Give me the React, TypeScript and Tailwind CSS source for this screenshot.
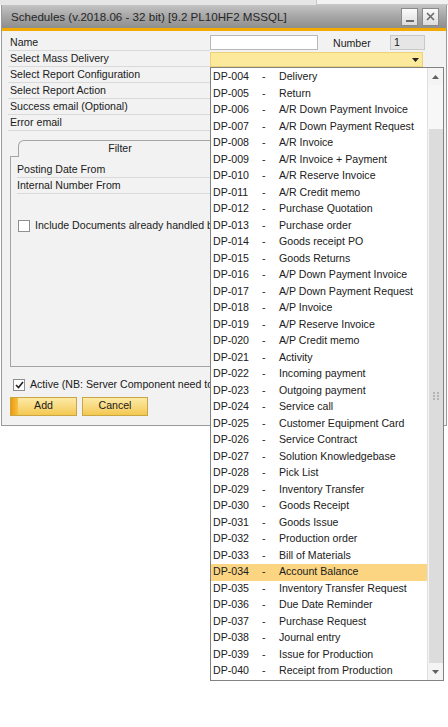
import React from "react";

const items: [string, string][] = [
  ["DP-004", "Delivery"],
  ["DP-005", "Return"],
  ["DP-006", "A/R Down Payment Invoice"],
  ["DP-007", "A/R Down Payment Request"],
  ["DP-008", "A/R Invoice"],
  ["DP-009", "A/R Invoice + Payment"],
  ["DP-010", "A/R Reserve Invoice"],
  ["DP-011", "A/R Credit memo"],
  ["DP-012", "Purchase Quotation"],
  ["DP-013", "Purchase order"],
  ["DP-014", "Goods receipt PO"],
  ["DP-015", "Goods Returns"],
  ["DP-016", "A/P Down Payment Invoice"],
  ["DP-017", "A/P Down Payment Request"],
  ["DP-018", "A/P Invoice"],
  ["DP-019", "A/P Reserve Invoice"],
  ["DP-020", "A/P Credit memo"],
  ["DP-021", "Activity"],
  ["DP-022", "Incoming payment"],
  ["DP-023", "Outgoing payment"],
  ["DP-024", "Service call"],
  ["DP-025", "Customer Equipment Card"],
  ["DP-026", "Service Contract"],
  ["DP-027", "Solution Knowledgebase"],
  ["DP-028", "Pick List"],
  ["DP-029", "Inventory Transfer"],
  ["DP-030", "Goods Receipt"],
  ["DP-031", "Goods Issue"],
  ["DP-032", "Production order"],
  ["DP-033", "Bill of Materials"],
  ["DP-034", "Account Balance"],
  ["DP-035", "Inventory Transfer Request"],
  ["DP-036", "Due Date Reminder"],
  ["DP-037", "Purchase Request"],
  ["DP-038", "Journal entry"],
  ["DP-039", "Issue for Production"],
  ["DP-040", "Receipt from Production"],
];

function LabelRow({ label }: { label: string }) {
  return (
    <div className="flex h-[16px] items-center">
      <div className="h-[16px] w-[202px] border-b border-[#dadada] pl-[2px] leading-[15px] whitespace-nowrap">
        {label}
      </div>
    </div>
  );
}

export default function App() {
  return (
    <div
      className="relative w-[448px] h-[727px] overflow-hidden bg-white text-[10.6px] text-[#202020]"
      style={{ fontFamily: '"Liberation Sans", Arial, sans-serif' }}
    >
      {/* strip of background window */}
      <div className="flex h-[5px] bg-[#e6e6e6]">
        <div className="flex-1" />
        <div className="w-[132px] border-l border-b border-[#c8c8c8] bg-[#f2f2f2]" />
      </div>

      {/* window */}
      <div className="ml-[1px] w-[446px] border-x border-b border-[#9a9a9a] bg-[#f2f2f2]">
        {/* title bar */}
        <div className="flex h-[23px] items-center bg-gradient-to-b from-[#c4c4c4] via-[#a6a6a6] to-[#8e8e8e] pl-[9px] pr-[7px]">
          <div className="flex-1 text-[11.6px] text-[#262626] whitespace-nowrap">
            Schedules (v.2018.06 - 32 bit) [9.2 PL10HF2 MSSQL]
          </div>
          <div className="flex gap-[4px]">
            <div className="flex h-[18px] w-[17px] items-end justify-center border border-[#8a8a8a] bg-gradient-to-b from-[#fbfbfb] to-[#dcdcdc] pb-[3px]">
              <div className="h-[2px] w-[8px] bg-[#6a6a6a]" />
            </div>
            <div className="flex h-[18px] w-[17px] items-center justify-center border border-[#8a8a8a] bg-gradient-to-b from-[#fbfbfb] to-[#dcdcdc]">
              <svg width="9" height="9" viewBox="0 0 9 9">
                <path d="M1 1 L8 8 M8 1 L1 8" stroke="#6a6a6a" strokeWidth="1.6" />
              </svg>
            </div>
          </div>
        </div>
        <div className="h-[3px] bg-[#f2a900]" />

        {/* body */}
        <div className="pt-[4px] pb-[9px]">
          <div className="pl-[6px]">
            <div className="flex h-[16px] items-start">
              <div className="h-[16px] w-[202px] border-b border-[#dadada] pl-[2px] leading-[15px]">Name</div>
              <div className="h-[15px] w-[108px] border border-[#b8b8b8] bg-white" />
              <div className="ml-[15px] w-[57px] leading-[16px]">Number</div>
              <div className="h-[15px] w-[35px] border border-[#c8c8c8] bg-[#e6e6e6] pl-[3px] leading-[13px]">1</div>
            </div>
            <div className="flex h-[16px] items-start">
              <div className="h-[16px] w-[202px] border-b border-[#dadada] pl-[2px] leading-[15px]">Select Mass Delivery</div>
              <div className="mt-[1px] flex h-[15px] w-[213px] items-center justify-end border border-[#ecd37a] bg-[#fde99b] pr-[3px]">
                <svg width="7" height="4" viewBox="0 0 7 4">
                  <path d="M0 0 L7 0 L3.5 4 Z" fill="#222" />
                </svg>
              </div>
            </div>
            <LabelRow label="Select Report Configuration" />
            <LabelRow label="Select Report Action" />
            <LabelRow label="Success email (Optional)" />
            <LabelRow label="Error email" />
          </div>

          {/* tab */}
          <div className="ml-[8px] mt-[9px] w-[430px]">
            <div className="flex h-[17px] items-end">
              <div className="w-[8px] border-b border-[#a4a4a4]" />
              <div className="flex h-[17px] w-[204px] items-center justify-center rounded-tl-[6px] border-l border-t border-r border-[#a4a4a4] bg-[#f2f2f2]">
                Filter
              </div>
              <div className="flex-1 border-b border-[#a4a4a4]" />
            </div>
            <div className="h-[210px] border-x border-b border-[#a4a4a4] pl-[6px] pt-[5px]">
              <div className="h-[16px] w-[193px] border-b border-[#dadada] leading-[15px]">Posting Date From</div>
              <div className="h-[16px] w-[193px] border-b border-[#dadada] leading-[15px]">Internal Number From</div>
              <div className="mt-[24px] flex items-center whitespace-nowrap">
                <div className="ml-[1px] h-[12px] w-[12px] shrink-0 border border-[#8f8f8f] bg-white" />
                <div className="ml-[5px]">Include Documents already handled b</div>
              </div>
            </div>
          </div>

          {/* active */}
          <div className="ml-[11px] mt-[10px] flex items-center whitespace-nowrap">
            <div className="flex h-[12px] w-[12px] shrink-0 items-center justify-center border border-[#8f8f8f] bg-white">
              <svg width="9" height="8" viewBox="0 0 9 8">
                <path d="M1 4 L3.5 6.5 L8 1" stroke="#222" strokeWidth="1.6" fill="none" />
              </svg>
            </div>
            <div className="ml-[5px]">Active (NB: Server Component need to</div>
          </div>

          {/* buttons */}
          <div className="ml-[8px] mt-[4px] flex gap-[5px]">
            <div className="relative flex h-[19px] w-[67px] items-center justify-center overflow-hidden border border-[#c9a544] bg-gradient-to-b from-[#fdeaa6] to-[#f3c84e]">
              <div className="absolute left-0 top-0 h-full w-[7px] bg-gradient-to-r from-[#f09a00] to-[#f5c040]" />
              <span className="relative">Add</span>
            </div>
            <div className="flex h-[19px] w-[66px] items-center justify-center border border-[#c9a544] bg-gradient-to-b from-[#fdeaa6] to-[#f3c84e]">
              Cancel
            </div>
          </div>
        </div>
      </div>

      {/* dropdown list */}
      <div className="absolute left-[210px] top-[67px] flex h-[614px] w-[234px] border border-[#828282] bg-white">
        <div className="w-[216px] pt-[1px]">
          {items.map(([code, name]) => (
            <div
              key={code}
              className={
                "flex h-[16.5px] items-center whitespace-nowrap pl-[2px] " +
                (code === "DP-034" ? "bg-[#fbd581]" : "")
              }
            >
              <span className="w-[49px]">{code}</span>
              <span className="w-[17px]">-</span>
              <span>{name}</span>
            </div>
          ))}
        </div>
        <div className="flex w-[16px] flex-col border-l border-[#e0e0e0] bg-[#efefef]">
          <div className="flex h-[17px] items-center justify-center bg-[#f4f4f4]">
            <svg width="7" height="4" viewBox="0 0 7 4">
              <path d="M0 4 L7 4 L3.5 0 Z" fill="#606060" />
            </svg>
          </div>
          <div className="h-[44px] bg-[#f7f7f7]" />
          <div className="flex flex-1 items-center justify-center border-l border-[#f4f4f4] bg-[#dcdcdc]">
            <svg width="6" height="8" viewBox="0 0 6 8">
              <g fill="#b4b4b4">
                <rect x="0" y="0" width="2" height="2" />
                <rect x="4" y="0" width="2" height="2" />
                <rect x="0" y="3" width="2" height="2" />
                <rect x="4" y="3" width="2" height="2" />
                <rect x="0" y="6" width="2" height="2" />
                <rect x="4" y="6" width="2" height="2" />
              </g>
            </svg>
          </div>
          <div className="flex h-[17px] items-center justify-center bg-[#f4f4f4]">
            <svg width="7" height="4" viewBox="0 0 7 4">
              <path d="M0 0 L7 0 L3.5 4 Z" fill="#606060" />
            </svg>
          </div>
        </div>
      </div>
    </div>
  );
}
